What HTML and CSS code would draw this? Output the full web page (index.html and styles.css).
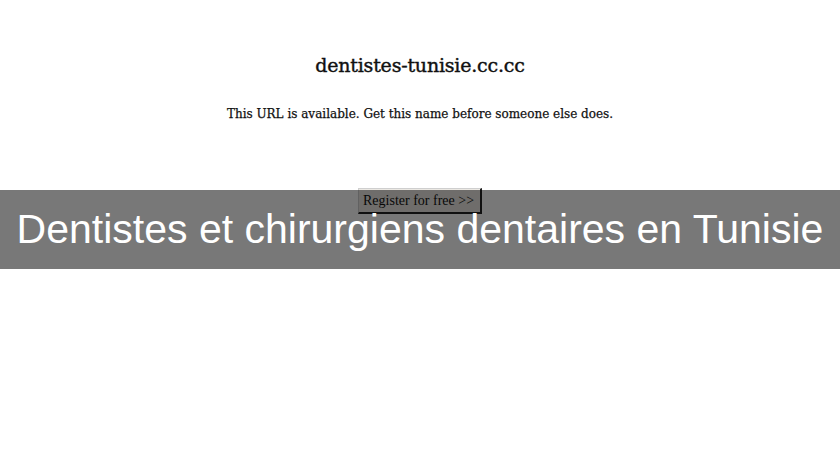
FILE: index.html
```html
<!DOCTYPE html>
<html>
<head>
<meta charset="utf-8">
<link rel="stylesheet" href="styles.css">
</head>
<body>
<div class="shot">
  <div class="parked">
    <h1 class="domain">dentistes-tunisie.cc.cc</h1>
    <p class="avail">This URL is available. Get this name before someone else does.</p>
    <span class="register">Register for free &gt;&gt;</span>
  </div>
  <div class="banner">Dentistes et chirurgiens dentaires en Tunisie</div>
</div>
</body>
</html>
```

FILE: styles.css
```css
html, body {
  margin: 0;
  padding: 0;
  background: #ffffff;
}
.shot {
  position: relative;
  width: 840px;
  height: 460px;
  overflow: hidden;
}
.parked {
  display: flex;
  flex-direction: column;
  align-items: center;
  padding-top: 52px;
  font-family: "DejaVu Serif", "Liberation Serif", serif;
  color: #111;
}
.domain {
  margin: 0;
  font-size: 19px;
  font-weight: normal;
  line-height: 26px;
  letter-spacing: -0.2px;
  -webkit-text-stroke: 0.4px #111;
}
.avail {
  margin: 28px 0 0;
  font-size: 12px;
  line-height: 16px;
  letter-spacing: 0;
  -webkit-text-stroke: 0.25px #111;
}
.register {
  margin-top: 66px;
  box-sizing: border-box;
  width: 124px;
  height: 26px;
  padding: 4px 0 0 4px;
  background: #ebe8e3;
  border: 1px solid #cfcfcf;
  border-right: 2px solid #222;
  border-bottom: 2px solid #222;
  font-family: "Liberation Serif", serif;
  font-size: 14px;
  line-height: 16px;
  color: #111;
  white-space: nowrap;
}
.banner {
  position: absolute;
  left: 0;
  right: 0;
  top: 190px;
  height: 79px;
  background: rgba(0, 0, 0, 0.53);
  color: #ffffff;
  font-family: "Liberation Sans", Arial, sans-serif;
  font-size: 41px;
  line-height: 79px;
  text-align: center;
  white-space: nowrap;
}
```
